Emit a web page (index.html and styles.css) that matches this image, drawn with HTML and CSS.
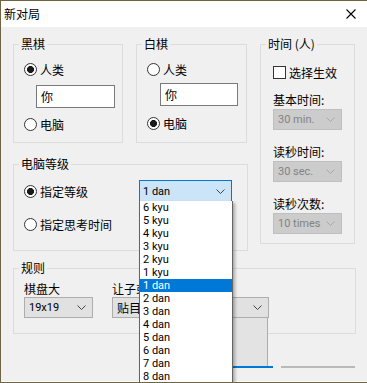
FILE: index.html
```html
<!DOCTYPE html>
<html lang="zh-CN">
<head>
    <meta charset="UTF-8">
    <meta name="viewport" content="width=device-width, initial-scale=1.0">
    <title>新对局</title>
    <link rel="stylesheet" href="styles.css">
</head>
<body>
    <div class="window">
        <div class="titlebar">
            <span class="title">新对局</span>
            <svg class="close" width="10" height="10" viewBox="0 0 10 10">
                <path d="M0.5 0.5 L9.5 9.5 M9.5 0.5 L0.5 9.5" stroke="#000" stroke-width="1.1" fill="none"/>
            </svg>
        </div>

        <div class="content">
            <div class="top">
                <div class="left-col">
                    <div class="players">
                        <!-- 黑棋 -->
                        <fieldset class="group player">
                            <legend>黑棋</legend>
                            <div class="group-body">
                                <div class="option"><span class="radio checked"></span>人类</div>
                                <div class="name-box">你</div>
                                <div class="option"><span class="radio"></span>电脑</div>
                            </div>
                        </fieldset>

                        <!-- 白棋 -->
                        <fieldset class="group player player-white">
                            <legend>白棋</legend>
                            <div class="group-body">
                                <div class="option"><span class="radio"></span>人类</div>
                                <div class="name-box">你</div>
                                <div class="option"><span class="radio checked"></span>电脑</div>
                            </div>
                        </fieldset>
                    </div>

                    <!-- 电脑等级 -->
                    <fieldset class="group level">
                        <legend>电脑等级</legend>
                        <div class="group-body">
                            <div class="level-row">
                                <div class="option level-label"><span class="radio checked"></span>指定等级</div>
                                <div class="combo">
                                    <span class="latin">1 dan</span>
                                    <svg class="chevron" width="9" height="5" viewBox="0 0 9 5"><polyline points="0.5,0.5 4.5,4.5 8.5,0.5" fill="none" stroke="#444" stroke-width="1"/></svg>
                                </div>
                            </div>
                            <div class="option think"><span class="radio"></span>指定思考时间</div>
                        </div>
                    </fieldset>
                </div>

                <!-- 时间 (人) -->
                <fieldset class="group timer">
                    <legend>时间 (人)</legend>
                    <div class="group-body">
                        <div class="option check-row"><span class="checkbox"></span>选择生效</div>
                        <div class="field-label first">基本时间:</div>
                        <div class="select disabled">
                            <span class="latin">30 min.</span>
                            <svg class="chevron" width="9" height="5" viewBox="0 0 9 5"><polyline points="0.5,0.5 4.5,4.5 8.5,0.5" fill="none" stroke="#a8a8a8" stroke-width="1"/></svg>
                        </div>
                        <div class="field-label">读秒时间:</div>
                        <div class="select disabled">
                            <span class="latin">30 sec.</span>
                            <svg class="chevron" width="9" height="5" viewBox="0 0 9 5"><polyline points="0.5,0.5 4.5,4.5 8.5,0.5" fill="none" stroke="#a8a8a8" stroke-width="1"/></svg>
                        </div>
                        <div class="field-label">读秒次数:</div>
                        <div class="select disabled">
                            <span class="latin">10 times</span>
                            <svg class="chevron" width="9" height="5" viewBox="0 0 9 5"><polyline points="0.5,0.5 4.5,4.5 8.5,0.5" fill="none" stroke="#a8a8a8" stroke-width="1"/></svg>
                        </div>
                    </div>
                </fieldset>
            </div>

            <!-- 规则 -->
            <fieldset class="group rules">
                <legend>规则</legend>
                <div class="group-body rules-body">
                    <div class="rule-col size-col">
                        <div class="field-label">棋盘大</div>
                        <div class="select">
                            <span class="latin">19x19</span>
                            <svg class="chevron" width="9" height="5" viewBox="0 0 9 5"><polyline points="0.5,0.5 4.5,4.5 8.5,0.5" fill="none" stroke="#444" stroke-width="1"/></svg>
                        </div>
                    </div>
                    <div class="rule-col komi-col">
                        <div class="field-label">让子或贴目</div>
                        <div class="select">
                            <span>贴目 6.5</span>
                            <svg class="chevron" width="9" height="5" viewBox="0 0 9 5"><polyline points="0.5,0.5 4.5,4.5 8.5,0.5" fill="none" stroke="#444" stroke-width="1"/></svg>
                        </div>
                    </div>
                </div>
            </fieldset>

            <div class="buttons">
                <button class="btn btn-default"></button>
                <button class="btn"></button>
            </div>
        </div>

        <!-- 没刷新的区域 -->
        <div class="ghost"></div>

        <!-- 展开的等级列表 -->
        <ul class="droplist latin">
            <li>6 kyu</li>
            <li>5 kyu</li>
            <li>4 kyu</li>
            <li>3 kyu</li>
            <li>2 kyu</li>
            <li>1 kyu</li>
            <li class="selected">1 dan</li>
            <li>2 dan</li>
            <li>3 dan</li>
            <li>4 dan</li>
            <li>5 dan</li>
            <li>6 dan</li>
            <li>7 dan</li>
            <li>8 dan</li>
        </ul>
    </div>
</body>
</html>
```

FILE: styles.css
```css
body {
    margin: 0;
    font-family: "Noto Sans CJK SC", sans-serif;
    font-size: 12px;
    color: #000;
}
.latin {
    font-family: Roboto, "Noto Sans CJK SC", sans-serif;
    font-size: 11px;
}
.window {
    position: relative;
    width: 367px;
    height: 383px;
    box-sizing: border-box;
    overflow: hidden;
    background-color: #f0f0f0;
    border-top: 1px solid #6f6444;
    border-left: 1px solid #6f6444;
    border-bottom: 1px solid #6f6444;
    box-shadow: inset 0 -1px 0 #fbfbfb;
}
.titlebar {
    height: 26px;
    background-color: #fff;
    display: flex;
    align-items: center;
    justify-content: space-between;
    padding: 0 11px 0 3px;
}
.title {
    line-height: 14px;
}
.content {
    padding: 10px 12px 0 12px;
}
.top {
    display: flex;
    gap: 12px;
}
.players {
    display: flex;
    gap: 13px;
}

/* group box */
.group {
    margin: 0;
    padding: 0;
    border: 1px solid #dcdcdc;
    box-sizing: border-box;
    min-width: 0;
}
.group legend {
    margin-left: 5px;
    padding: 0 2px;
    height: 14px;
    line-height: 14px;
}
.group-body {
    padding-left: 10px;
}

.option {
    display: flex;
    align-items: center;
    height: 16px;
    gap: 3px;
    white-space: nowrap;
}
.radio {
    width: 13px;
    height: 13px;
    box-sizing: border-box;
    border: 1px solid #333;
    border-radius: 50%;
    background-color: #fff;
    flex: none;
}
.radio.checked {
    background: radial-gradient(circle, #1a1a1a 3.2px, #fff 3.8px);
}
.checkbox {
    width: 13px;
    height: 13px;
    box-sizing: border-box;
    border: 1px solid #333;
    background-color: #fff;
    flex: none;
}

/* 黑棋 / 白棋 */
.player {
    width: 110px;
    height: 106px;
}
.player .group-body {
    padding-top: 10px;
}
.name-box {
    width: 79px;
    height: 23px;
    box-sizing: border-box;
    margin: 8px 0 8px 12px;
    border: 1px solid #7a7a7a;
    background-color: #fff;
    padding-left: 4px;
    line-height: 21px;
}
.player-white {
    width: 111px;
}
.player-white .name-box {
    width: 78px;
    margin: 6px 0 9px 13px;
}

/* 电脑等级 */
.level {
    width: 235px;
    height: 94px;
    margin-top: 14px;
}
.level .group-body {
    padding-top: 9px;
}
.level-row {
    display: flex;
    align-items: center;
}
.level-label {
    width: 115px;
}
.combo {
    width: 93px;
    height: 22px;
    box-sizing: border-box;
    border: 1px solid #0078d7;
    background-color: #cce4f7;
    display: flex;
    align-items: center;
    justify-content: space-between;
    padding: 0 6px 0 3px;
}
.think {
    margin-top: 14px;
}

/* 时间 (人) */
.timer {
    width: 95px;
    height: 207px;
}
.timer .group-body {
    padding-top: 13px;
    padding-left: 12px;
}
.field-label {
    height: 14px;
    line-height: 14px;
    margin-top: 15px;
    margin-bottom: 2px;
    white-space: nowrap;
}
.timer .field-label.first {
    margin-top: 13px;
}
.select {
    height: 21px;
    box-sizing: border-box;
    border: 1px solid #adadad;
    background-color: #e1e1e1;
    display: flex;
    align-items: center;
    justify-content: space-between;
    padding: 0 6px 0 4px;
    white-space: nowrap;
}
.timer .select {
    width: 69px;
}
.select.disabled {
    background-color: #cccccc;
    border-color: #bfbfbf;
    color: #838383;
}

/* 规则 */
.rules {
    width: 343px;
    height: 73px;
    margin-top: 10px;
}
.rules-body {
    display: flex;
    gap: 19px;
    padding-top: 7px;
}
.rules .field-label {
    margin-top: 0;
    margin-bottom: 1px;
}
.size-col {
    width: 69px;
}
.komi-col {
    width: 157px;
}

/* 按钮 */
.buttons {
    display: flex;
    justify-content: flex-end;
    gap: 8px;
    margin-top: 11px;
}
.btn {
    width: 76px;
    height: 23px;
    padding: 0;
    background: transparent;
    border: none;
    border-bottom: 2px solid #b9b9b9;
}
.btn-default {
    border-bottom-color: #0078d7;
}
.btn:last-child {
    width: 74px;
}

.ghost {
    position: absolute;
    left: 231px;
    top: 317px;
    width: 35px;
    height: 48px;
    background-color: #e3e3e3;
    border-right: 1px solid #adadad;
}

/* 下拉列表 */
.droplist {
    position: absolute;
    left: 138px;
    top: 200px;
    width: 94px;
    margin: 0;
    padding: 0;
    list-style: none;
    background-color: #fff;
    border: 1px solid #646464;
    border-top: none;
    box-sizing: border-box;
    box-shadow: 2px 2px 3px rgba(0, 0, 0, 0.3);
}
.droplist li {
    height: 13px;
    line-height: 13px;
    padding-left: 3px;
}
.droplist li.selected {
    background-color: #0078d7;
    color: #fff;
}
```
